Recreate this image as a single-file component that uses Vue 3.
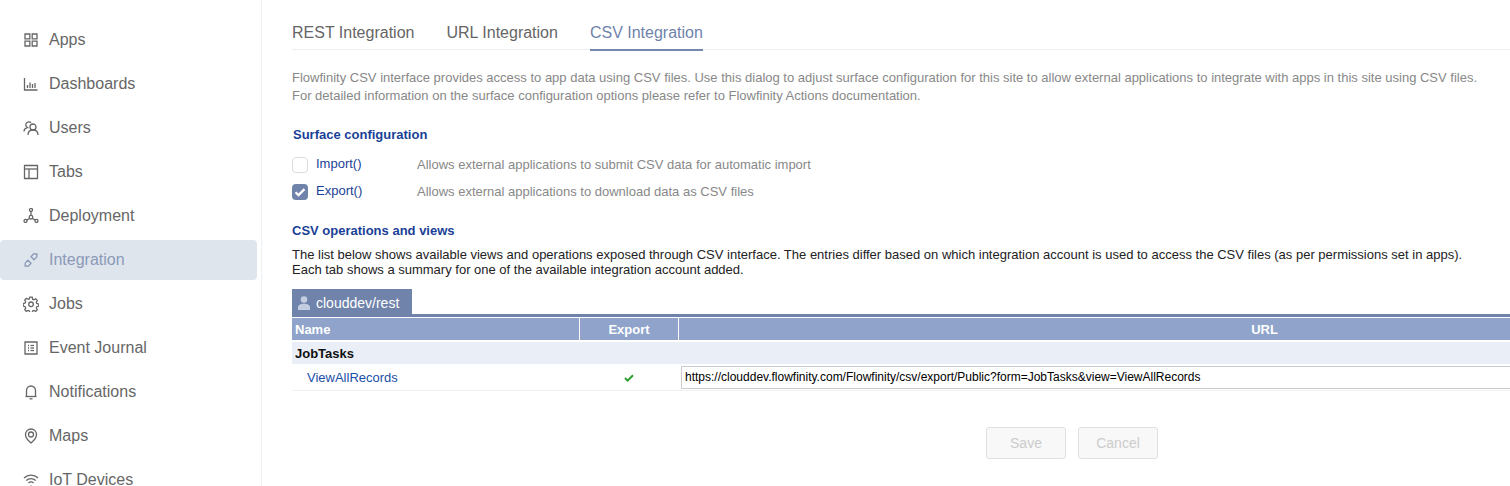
<template>
  <div class="page">
    <aside class="sidebar">
      <nav class="nav">
        <a v-for="item in navItems" :key="item.label" class="nav-item" :class="{ active: item.active }">
          <svg class="nav-icon" viewBox="0 0 16 16" fill="none" stroke="currentColor" stroke-width="1.3">
            <path v-for="(d, i) in item.paths" :key="i" :d="d" />
          </svg>
          <span>{{ item.label }}</span>
        </a>
      </nav>
    </aside>

    <main class="main">
      <div class="tabs">
        <span class="tab">REST Integration</span>
        <span class="tab">URL Integration</span>
        <span class="tab current">CSV Integration</span>
      </div>

      <p class="intro">
        Flowfinity CSV interface provides access to app data using CSV files. Use this dialog to adjust surface configuration for this site to allow external applications to integrate with apps in this site using CSV files.<br />
        For detailed information on the surface configuration options please refer to Flowfinity Actions documentation.
      </p>

      <h3 class="section surface-title">Surface configuration</h3>
      <div class="option">
        <span class="check"></span>
        <span class="option-name">Import()</span>
        <span class="option-desc">Allows external applications to submit CSV data for automatic import</span>
      </div>
      <div class="option">
        <span class="check on">
          <svg viewBox="0 0 16 16" width="16" height="16" fill="none" stroke="#fff" stroke-width="2.2">
            <path d="M3.5 8.3l3 2.8 6-6" />
          </svg>
        </span>
        <span class="option-name">Export()</span>
        <span class="option-desc">Allows external applications to download data as CSV files</span>
      </div>

      <h3 class="section ops-title">CSV operations and views</h3>
      <p class="ops-text">
        The list below shows available views and operations exposed through CSV interface. The entries differ based on which integration account is used to access the CSV files (as per permissions set in apps).<br />
        Each tab shows a summary for one of the available integration account added.
      </p>

      <div class="account-tab">
        <svg viewBox="1 0 12 14" width="12" height="14" fill="#c3cde0">
          <circle cx="7" cy="3.6" r="3.3" />
          <path d="M1 14v-2.6C1 9 3.5 7.8 7 7.8s6 1.2 6 3.6V14z" />
        </svg>
        <span>clouddev/rest</span>
      </div>
      <div class="table-wrap">
        <div class="row head">
          <div class="col-name">Name</div>
          <div class="col-export">Export</div>
          <div class="col-url">URL</div>
        </div>
        <div class="group">JobTasks</div>
        <div class="row record">
          <div class="col-name link">ViewAllRecords</div>
          <div class="col-export">
            <svg viewBox="0 0 10 8" width="10" height="8" fill="none" stroke="#2e9e2e" stroke-width="2">
              <path d="M1 4l2.6 2.6L9 1.2" />
            </svg>
          </div>
          <div class="col-url">
            <input class="url-input" readonly value="https://clouddev.flowfinity.com/Flowfinity/csv/export/Public?form=JobTasks&view=ViewAllRecords" />
          </div>
        </div>
      </div>

      <div class="actions">
        <button class="btn" disabled>Save</button>
        <button class="btn" disabled>Cancel</button>
      </div>
    </main>
  </div>
</template>

<script setup>
const navItems = [
  { label: 'Apps', paths: ['M2 2h4.800v4.800H2z', 'M9.200 2H14v4.800H9.200z', 'M2 9.200h4.800V14H2z', 'M9.200 9.200H14V14H9.200z'] },
  { label: 'Dashboards', paths: ['M1.500 2v12h13', 'M4.500 12V9', 'M7 12V6.500', 'M9.500 12V8', 'M12 12V7'] },
  { label: 'Users', paths: ['M5.500 7.800A3 3 0 1 1 8 2.800', 'M1 11.500c0-2 1-3.200 3-3.600', 'M10 10a3 3 0 1 0 0-6 3 3 0 0 0 0 6z', 'M5 15c0-3 2-5 5-5s5 2 5 5'] },
  { label: 'Tabs', paths: ['M1.500 1.500h13v13h-13z', 'M1.500 5h13', 'M6 5v9.500'] },
  { label: 'Deployment', paths: ['M8 3.400a1.500 1.500 0 1 0 0-3 1.500 1.500 0 0 0 0 3z', 'M2.500 14.400a1.500 1.500 0 1 0 0-3 1.500 1.500 0 0 0 0 3z', 'M13.500 14.400a1.500 1.500 0 1 0 0-3 1.500 1.500 0 0 0 0 3z', 'M8 11a1.800 1.800 0 1 0 0-3.600 1.800 1.800 0 0 0 0 3.600z', 'M8 3.400v4', 'M3.800 12.100l2.700-1.600', 'M12.200 12.100l-2.700-1.600'] },
  { label: 'Integration', active: true, paths: ['M6 13.500a2.200 2.200 0 0 1-3.400-2.900L5 8.200l3 3z', 'M10 2.500a2.200 2.200 0 0 1 3.400 2.900L11 7.800l-3-3z', 'M1.500 14.500l1.400-1.400', 'M13 3l1.500-1.500'] },
  { label: 'Jobs', paths: ['M6.800 1.200h2.400l.4 2 1.300.6 1.800-1 1.600 1.700-1 1.700.5 1.300 2 .5v2.200l-2 .5-.5 1.300 1 1.700-1.600 1.700-1.800-1-1.300.5-.4 2H6.800l-.4-2-1.300-.5-1.800 1-1.600-1.700 1-1.700-.5-1.300-2-.5V7.500l2-.5.5-1.300-1-1.700 1.600-1.700 1.800 1 1.300-.6z', 'M8 10.600a2.300 2.300 0 1 0 0-4.600 2.300 2.300 0 0 0 0 4.600z'] },
  { label: 'Event Journal', paths: ['M2 2h12v12H2z', 'M5 5.500h1', 'M7.500 5.500H11', 'M5 8h1', 'M7.500 8H11', 'M5 10.500h1', 'M7.500 10.500H11'] },
  { label: 'Notifications', paths: ['M3.500 12V6.500a4.500 4.500 0 0 1 9 0V12', 'M2.500 12.500h11', 'M6.500 14.800h3'] },
  { label: 'Maps', paths: ['M8 15s5.500-4.500 5.500-8.500a5.500 5.500 0 0 0-11 0C2.500 10.500 8 15 8 15z', 'M8 9a2.500 2.500 0 1 0 0-5 2.500 2.500 0 0 0 0 5z'] },
  { label: 'IoT Devices', paths: ['M1 6a10 10 0 0 1 14 0', 'M3.300 8.500a6.800 6.800 0 0 1 9.400 0', 'M5.500 11a3.500 3.500 0 0 1 5 0', 'M8 13.500v.5'] },
]
</script>

<style scoped>
.page {
  display: flex;
  width: 1510px;
  height: 486px;
  overflow: hidden;
  background: #fff;
  font-family: "Liberation Sans", Arial, sans-serif;
}

.sidebar {
  flex: none;
  width: 262px;
  height: 486px;
  box-sizing: border-box;
  border-right: 1px solid #eef0f3;
  overflow: hidden;
}

.nav {
  display: flex;
  flex-direction: column;
  gap: 4px;
  padding-top: 20px;
  width: 257px;
}

.nav-item {
  display: flex;
  align-items: center;
  flex: none;
  height: 40px;
  padding-left: 23px;
  border-radius: 4px;
  font-size: 16px;
  color: #666;
}

.nav-item.active {
  background: #dfe5ed;
  color: #8b9ab8;
}

.nav-icon {
  flex: none;
  width: 16px;
  height: 16px;
  margin-right: 10px;
}

.main {
  flex: none;
  width: 1248px;
  box-sizing: border-box;
  padding-left: 30px;
}

.tabs {
  display: flex;
  gap: 32px;
  height: 50px;
  box-sizing: border-box;
  padding-top: 24px;
  border-bottom: 1px solid #eceef1;
}

.tab {
  height: 25px;
  font-size: 16px;
  line-height: 18px;
  color: #666;
}

.tab.current {
  color: #6f83ab;
  border-bottom: 2px solid #7587ad;
}

.intro {
  margin: 19px 0 0;
  font-size: 13px;
  line-height: 18px;
  color: #888;
  white-space: nowrap;
}

.section {
  margin: 0;
  font-size: 13px;
  font-weight: 700;
  line-height: 16px;
  color: #1a3f97;
}

.surface-title {
  margin: 22px 0 0 1px;
}

.option {
  display: flex;
  align-items: center;
  height: 27px;
  font-size: 13px;
}

.surface-title + .option {
  margin-top: 8px;
}

.check {
  flex: none;
  width: 16px;
  height: 16px;
  box-sizing: border-box;
  border: 1px solid #dcdcdc;
  border-radius: 4px;
  background: #fff;
}

.check.on {
  border: 0;
  background: #6f83ab;
}

.check svg {
  display: block;
}

.option-name {
  flex: none;
  width: 101px;
  margin: 0 0 2px 8px;
  color: #1a3f97;
}

.option-desc {
  color: #888;
}

.ops-title {
  margin-top: 18px;
}

.ops-text {
  margin: 8px 0 0;
  font-size: 13px;
  line-height: 15px;
  color: #222;
  white-space: nowrap;
}

.account-tab {
  display: flex;
  align-items: center;
  gap: 6px;
  width: 120px;
  height: 25px;
  margin-top: 12px;
  box-sizing: border-box;
  padding: 2px 0 0 6px;
  background: #6f83ab;
  color: #fff;
  font-size: 14px;
}

.table-wrap {
  width: 1558px;
  border-top: 3px solid #6f83ab;
  font-size: 13px;
}

.row {
  display: flex;
}

.col-name {
  flex: none;
  width: 288px;
  box-sizing: border-box;
}

.col-export {
  flex: none;
  width: 98px;
  text-align: center;
}

.col-url {
  flex: 1;
  min-width: 0;
}

.head {
  height: 22px;
  margin-top: 1px;
  background: #8fa3cb;
  color: #fff;
  font-weight: 700;
  line-height: 23px;
}

.head .col-name {
  padding-left: 3px;
  border-right: 1px solid #fff;
}

.head .col-export {
  border-right: 1px solid #fff;
}

.head .col-url {
  text-align: center;
}

.group {
  height: 22px;
  margin-top: 2px;
  padding-left: 3px;
  background: #eaeef6;
  font-size: 13px;
  font-weight: 700;
  line-height: 23px;
  color: #111;
}

.record {
  align-items: center;
  height: 26px;
  border-bottom: 1px solid #eef0f6;
}

.record .col-name {
  padding-left: 15px;
}

.link {
  color: #1a4fa8;
}

.record .col-export svg {
  display: block;
  margin: 2px auto 0;
}

.url-input {
  display: block;
  width: 100%;
  height: 23px;
  margin-left: 3px;
  padding: 0 3px;
  box-sizing: border-box;
  border: 1px solid #ccc;
  outline: 0;
  font: 12px "Liberation Sans", Arial, sans-serif;
  color: #000;
}

.actions {
  display: flex;
  gap: 12px;
  margin: 36px 0 0 694px;
}

.btn {
  width: 80px;
  height: 32px;
  padding: 0;
  border: 1px solid #e0e0e0;
  border-radius: 3px;
  background: #f8f8f8;
  font: 14px "Liberation Sans", Arial, sans-serif;
  color: #ccc;
}
</style>
